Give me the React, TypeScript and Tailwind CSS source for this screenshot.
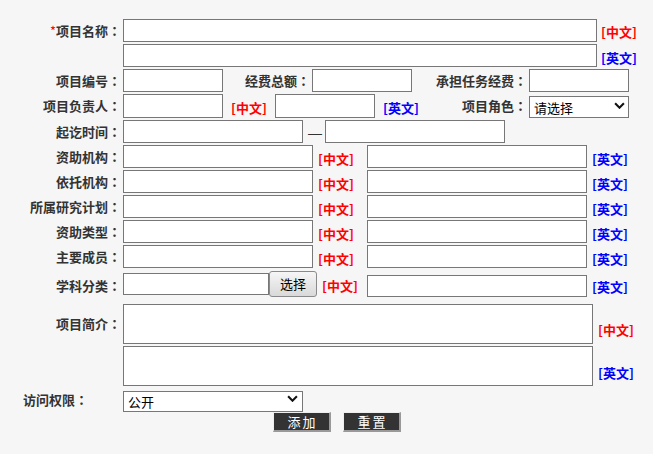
import React from 'react';

// 项目信息录入表单
const Colon = () => <span className="font-['Noto_Sans_CJK_TC',sans-serif]">：</span>;

const Label = ({ children, className = '' }: { children: React.ReactNode; className?: string }) => (
  <div className={`shrink-0 whitespace-nowrap text-[13px] font-bold text-[#333] leading-[16px] ${className}`}>
    {children}
    <Colon />
  </div>
);

const Zh = () => <span className="whitespace-nowrap text-[13px] font-bold text-[#f00] leading-[16px]">[中文]</span>;
const En = () => <span className="whitespace-nowrap text-[13px] font-bold text-[#00f] leading-[16px]">[英文]</span>;

const inputCls = 'shrink-0 border border-[#777] bg-white outline-none px-1 text-[13px]';

const Chevron = ({ className = '' }: { className?: string }) => (
  <svg viewBox="0 0 10 6" className={`absolute w-[11px] h-[7px] pointer-events-none ${className}`}>
    <path d="M1 1 L5 5 L9 1" fill="none" stroke="#111" strokeWidth="1.9" />
  </svg>
);

const BilingualRow = ({ label }: { label: string }) => (
  <div className="flex items-center h-[23px] mt-[2px]">
    <Label className="w-[123px] text-right pr-[2px]">{label}</Label>
    <input type="text" className={`${inputCls} w-[190px] h-[23px]`} />
    <div className="w-[54px] shrink-0 pl-[5px]"><Zh /></div>
    <input type="text" className={`${inputCls} w-[220px] h-[23px]`} />
    <div className="shrink-0 pl-[5px]"><En /></div>
  </div>
);

export default function App() {
  return (
    <div className="w-[653px] h-[454px] bg-[#f6f6f6] font-['Noto_Sans_CJK_SC',sans-serif] overflow-hidden">
      <div className="flex flex-col pt-[19px]">
        {/* 项目名称 */}
        <div className="flex items-center h-[23px]">
          <Label className="w-[123px] text-right pr-[2px]">
            <span className="text-[#f00] font-normal">*</span>项目名称
          </Label>
          <input type="text" className={`${inputCls} w-[474px] h-[23px]`} />
          <div className="shrink-0 pl-[4px] pb-[2px]"><Zh /></div>
        </div>
        <div className="flex items-center h-[23px] mt-[2px]">
          <div className="w-[123px] shrink-0" />
          <input type="text" className={`${inputCls} w-[474px] h-[23px]`} />
          <div className="shrink-0 pl-[4px]"><En /></div>
        </div>

        {/* 项目编号 / 经费 */}
        <div className="flex items-center h-[23px] mt-[2px]">
          <Label className="w-[123px] text-right pr-[2px]">项目编号</Label>
          <input type="text" className={`${inputCls} w-[100px] h-[23px]`} />
          <Label className="w-[89px] text-right pr-[2px]">经费总额</Label>
          <input type="text" className={`${inputCls} w-[100px] h-[23px]`} />
          <Label className="w-[117px] text-right pr-[2px]">承担任务经费</Label>
          <input type="text" className={`${inputCls} w-[100px] h-[23px]`} />
        </div>

        {/* 项目负责人 */}
        <div className="flex items-center h-[24px] mt-[2px]">
          <Label className="w-[123px] text-right pr-[2px]">项目负责人</Label>
          <input type="text" className={`${inputCls} w-[100px] h-[24px]`} />
          <div className="w-[52px] shrink-0 pl-[8px]"><Zh /></div>
          <input type="text" className={`${inputCls} w-[100px] h-[24px]`} />
          <div className="w-[42px] shrink-0 pl-[8px]"><En /></div>
          <Label className="w-[112px] text-right pr-[2px]">项目角色</Label>
          <div className="relative shrink-0">
            <select className="appearance-none w-[100px] h-[22px] border border-[#777] bg-white pl-[4px] text-[13px] text-black outline-none">
              <option>请选择</option>
            </select>
            <Chevron className="right-[4px] top-[8px]" />
          </div>
        </div>

        {/* 起讫时间 */}
        <div className="flex items-center h-[23px] mt-[2px]">
          <Label className="w-[123px] text-right pr-[2px]">起讫时间</Label>
          <input type="text" className={`${inputCls} w-[180px] h-[23px]`} />
          <span className="w-[22px] shrink-0 text-center text-[14px] text-[#333] pl-[2px] pt-[4px] font-['Liberation_Sans',sans-serif]">—</span>
          <input type="text" className={`${inputCls} w-[180px] h-[23px]`} />
        </div>

        <BilingualRow label="资助机构" />
        <BilingualRow label="依托机构" />
        <BilingualRow label="所属研究计划" />
        <BilingualRow label="资助类型" />
        <BilingualRow label="主要成员" />

        {/* 学科分类 */}
        <div className="flex items-start h-[26px] mt-[3px]">
          <Label className="w-[123px] text-right pr-[2px] self-center pt-[4px]">学科分类</Label>
          <input type="text" className={`${inputCls} w-[146px] h-[22px] mt-[2px]`} />
          <button className="shrink-0 w-[48px] h-[26px] border border-[#8a8a8a] rounded-[3px] bg-gradient-to-b from-[#f6f6f6] to-[#d9d9d9] text-[13px] text-black">
            选择
          </button>
          <div className="w-[50px] shrink-0 pl-[5px] self-center"><Zh /></div>
          <input type="text" className={`${inputCls} w-[220px] h-[22px] mt-[4px]`} />
          <div className="shrink-0 pl-[5px] h-[22px] mt-[5px] flex items-center"><En /></div>
        </div>

        {/* 项目简介 */}
        <div className="flex items-center mt-[7px]">
          <Label className="w-[123px] text-right pr-[2px]">项目简介</Label>
          <textarea className={`${inputCls} w-[470px] h-[40px] resize-none`} />
          <div className="shrink-0 pl-[5px] self-end pb-[4px]"><Zh /></div>
        </div>
        <div className="flex items-center mt-[2px]">
          <div className="w-[123px] shrink-0" />
          <textarea className={`${inputCls} w-[470px] h-[40px] resize-none`} />
          <div className="shrink-0 pl-[5px] self-end pb-[3px]"><En /></div>
        </div>

        {/* 访问权限 */}
        <div className="flex items-center h-[21px] mt-[3px]">
          <Label className="w-[123px] pl-[23px]">访问权限</Label>
          <div className="relative shrink-0">
            <select className="appearance-none w-[180px] h-[21px] border border-[#777] bg-white pl-[4px] pb-[2px] text-[13px] text-black outline-none">
              <option>公开</option>
              <option>不公开</option>
            </select>
            <Chevron className="right-[5px] top-[7px]" />
          </div>
        </div>

        {/* 操作按钮 */}
        <div className="flex items-center mt-[2px] pl-[273px] gap-[12px]">
          <button className="w-[58px] h-[20px] bg-[#333] text-white text-[13px] leading-none border-t border-l border-t-[#eee] border-l-[#eee] border-r-2 border-b-2 border-r-[#999] border-b-[#999] tracking-[2px] pl-[2px]">
            添加
          </button>
          <button className="w-[58px] h-[20px] bg-[#333] text-white text-[13px] leading-none border-t border-l border-t-[#eee] border-l-[#eee] border-r-2 border-b-2 border-r-[#999] border-b-[#999] tracking-[2px] pl-[2px]">
            重置
          </button>
        </div>
      </div>
    </div>
  );
}
